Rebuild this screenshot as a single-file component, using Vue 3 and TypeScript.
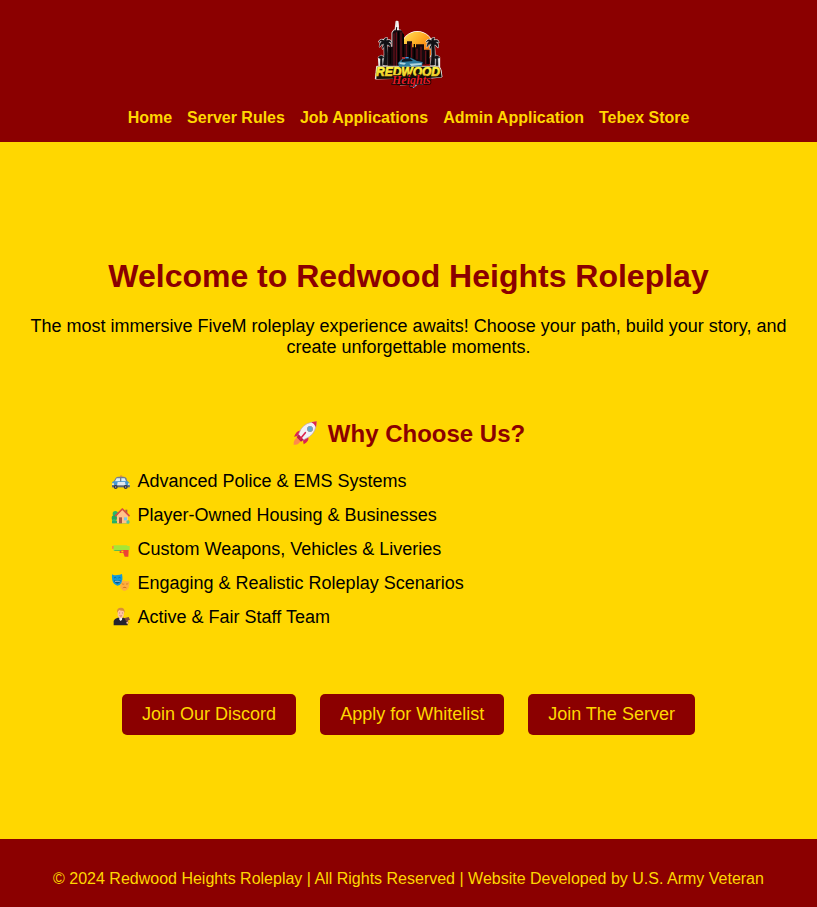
<script setup lang="ts">
interface LinkItem {
  label: string
  href: string
}

interface Feature {
  icon: 'car' | 'house' | 'blaster' | 'masks' | 'judge'
  text: string
}

const navLinks: LinkItem[] = [
  { label: 'Home', href: '#home' },
  { label: 'Server Rules', href: '#rules' },
  { label: 'Job Applications', href: '#jobs' },
  { label: 'Admin Application', href: '#admin' },
  { label: 'Tebex Store', href: '#store' },
]

const features: Feature[] = [
  { icon: 'car', text: 'Advanced Police & EMS Systems' },
  { icon: 'house', text: 'Player-Owned Housing & Businesses' },
  { icon: 'blaster', text: 'Custom Weapons, Vehicles & Liveries' },
  { icon: 'masks', text: 'Engaging & Realistic Roleplay Scenarios' },
  { icon: 'judge', text: 'Active & Fair Staff Team' },
]

const actions: LinkItem[] = [
  { label: 'Join Our Discord', href: '#discord' },
  { label: 'Apply for Whitelist', href: '#whitelist' },
  { label: 'Join The Server', href: '#join' },
]
</script>

<template>
  <div class="page">
    <header class="site-header">
      <svg class="logo" viewBox="13 9 240 240" role="img" aria-label="Redwood Heights">
        <defs>
          <linearGradient id="sun" x1="0" y1="0" x2="1" y2="1">
            <stop offset="0" stop-color="#ffe95e" />
            <stop offset="0.45" stop-color="#ffa51f" />
            <stop offset="1" stop-color="#ec5210" />
          </linearGradient>
          <linearGradient id="gold" x1="0" y1="0" x2="0" y2="1">
            <stop offset="0.2" stop-color="#fff23c" />
            <stop offset="0.85" stop-color="#e0a010" />
          </linearGradient>
          <g id="palm">
            <path d="M-3 -2 L4 -2 Q8 30 6 62 L-6 62 Q0 30 -3 -2Z" />
            <path d="M0 0 Q-11 -5 -17 7 Q-16 -8 -8 -8 Q-15 -12 -19 -8 Q-13 -18 -4 -11 Q-3 -20 5 -19 Q2 -15 4 -11 Q14 -17 18 -6 Q12 -10 8 -6 Q18 -4 16 9 Q11 0 3 0 Q6 6 2 11 Q-1 6 -1 2 Q-6 5 -8 13 Q-10 5 0 0Z" />
          </g>
        </defs>
        <circle cx="158" cy="106" r="49" fill="#fff" />
        <circle cx="158" cy="106" r="47" fill="url(#sun)" />
        <g stroke="#e8e8e8" stroke-width="5" stroke-linejoin="round" fill="#e8e8e8">
          <use href="#palm" x="62" y="97" />
          <use href="#palm" x="204" y="97" />
          <path d="M78 166V106h5V62l5-7h4l3-26h3l3 26h5l5 7v104z" />
          <path d="M42 136l8-5 8 5v28H44z M208 136l8-5 8 5v28h-14z" />
        </g>
        <g fill="#101014" stroke="#101014" stroke-width="2" stroke-linejoin="round">
          <use href="#palm" x="62" y="97" />
          <use href="#palm" x="204" y="97" />
          <path d="M41 137q8-12 17 0-7-2-6 5l1 22h-6l1-22q-1-5-7-5zM208 137q8-12 17 0-7-2-6 5l1 22h-6l1-22q-1-5-7-5z" />
        </g>
        <path d="M69 166v-62h14V62l5-7h5l2-10h7l2 10h6l5 7v34h12v-8h15v18h12v-9h24v16h17v43z" fill="#17090d" />
        <path d="M97 55l2-28h2l2 28z" fill="#fff" />
        <path d="M88 64v100M95 61v103M109 61v103M125 97v42M141 94v43M157 110v32M169 104v42M183 116v40" stroke="#74131d" stroke-width="3" />
        <path d="M77 107v48M102 58v96M116 65v88M134 98v52M149 96v44M190 118v38" stroke="#000" stroke-width="4" />
        <path d="M36 163h188l5 11 3 21-40 4-3 10-17 8-12-2-14 12-9-10-31 2-9-20-65 2 2-20z" fill="#e8e8e8" stroke="#e8e8e8" stroke-width="3" stroke-linejoin="round" />
        <path d="M39 164h183l6 10 3 22-42 2-3 10-17 7-12-2-16 5-43 2-6-20-57 1 1-18z" fill="#141006" />
        <path d="M100 153l12-12 26-4 19 10 17 3-2 13-68 2z" fill="#2d7ba0" />
        <path d="M112 144l10-5 13-1 10 9-34 3z" fill="#0b1824" />
        <path d="M104 151l20 2-5 5-14-2zM134 155l37-2v5l-31 4z" fill="#b2d5dd" />
        <path d="M112 138h9" stroke="#f54042" stroke-width="4" />
        <path d="M122 137h10" stroke="#459ae9" stroke-width="4" />
        <text>
          <tspan class="logo-name" x="34" y="191">REDWOOD</tspan>
          <tspan class="logo-script" x="82" y="216">Heights</tspan>
        </text>
      </svg>
      <nav class="nav" aria-label="Main">
        <a v-for="link in navLinks" :key="link.label" :href="link.href">{{ link.label }}</a>
      </nav>
    </header>

    <main class="hero">
      <h1>Welcome to Redwood Heights Roleplay</h1>
      <p class="intro">
        The most immersive FiveM roleplay experience awaits! Choose your path, build your story, and create
        unforgettable moments.
      </p>

      <section class="why">
        <h2>
          <svg class="rocket" viewBox="24 24 78 84" aria-hidden="true">
            <path d="M44 76q-15 2-15 22 16 3 22-14z" fill="#ff8a4c" />
            <path d="M51 56q-12-2-21 18l15-3zM73 76q3 12-14 21l-3-16z" fill="#dc2451" />
            <path d="M96 30Q66 29 51 51L41 73l13 13 22-12Q98 59 96 30Z" fill="#f2f0f6" stroke="#b9a0b5" stroke-width="2" />
            <path d="M82 31l16-3-2 18Q93 36 82 31Z" fill="#dc2451" />
            <path d="M44 67l-6 9 13 13 8-6z" fill="#bd1f49" />
            <path d="M64 62L49 80" stroke="#dc2451" stroke-width="5" stroke-linecap="round" />
            <circle cx="78" cy="51" r="8" fill="#62a8ce" stroke="#8d9eb0" stroke-width="3" />
          </svg>
          <span>Why Choose Us?</span>
        </h2>
        <ul class="features">
          <li v-for="feature in features" :key="feature.icon">
            <svg v-if="feature.icon === 'car'" class="icon" viewBox="15 15 72 60" aria-hidden="true">
              <path d="M47 34l2-6h5l2 6z" fill="#e99a35" />
              <path d="M35 36q3-4 8-4h17q5 0 7 5l4 11H28z" fill="#777e8b" />
              <path d="M38 37h10v10H32zM52 37h10l5 10H52z" fill="#d9f0fb" />
              <path d="M28 46h43q6 3 6 11v6H24V52q0-4 4-6z" fill="#4698d2" />
              <path d="M41 48h22l3 14H38z" fill="#e2e8ed" />
              <path d="M24 58h53v6H24z" fill="#596474" />
              <path d="M24 52h6v5h-6zM72 52h5v5h-5z" fill="#f8e8a1" />
              <circle cx="35" cy="63" r="6" fill="#363442" />
              <circle cx="65" cy="63" r="6" fill="#363442" />
              <circle cx="35" cy="63" r="2" fill="#b6b5be" />
              <circle cx="65" cy="63" r="2" fill="#b6b5be" />
            </svg>
            <svg v-else-if="feature.icon === 'house'" class="icon" viewBox="15 117 72 60" aria-hidden="true">
              <circle cx="34" cy="143" r="8" fill="#28b56d" />
              <circle cx="31" cy="156" r="8" fill="#22a65f" />
              <circle cx="30" cy="166" r="6" fill="#35c378" />
              <path d="M24 164h50v8H24z" fill="#28ae66" />
              <path d="M64 131h6v14h-6z" fill="#a85c48" />
              <path d="M39 148l16-17 17 17v24H39z" fill="#ffc28a" />
              <path d="M35 149l20-20 20 20" fill="none" stroke="#d94b43" stroke-width="5" stroke-linejoin="round" stroke-linecap="round" />
              <path d="M45 154h9v18h-9z" fill="#a65342" />
              <path d="M60 154h9v9h-9z" fill="#73c8e8" />
              <circle cx="72" cy="168" r="5" fill="#51c2a0" />
            </svg>
            <svg v-else-if="feature.icon === 'blaster'" class="icon" viewBox="15 15 72 60" aria-hidden="true">
              <path d="M24 36h4v-2h42v2h7v12H55l-3 2H28v-5h-4z" fill="#a5e638" />
              <path d="M24 36h5v8h-5z" fill="#ff8a38" />
              <path d="M47 48h27l-1 20H62l-4-11H47z" fill="#ed4335" />
              <path d="M52 50h6v5h-6z" fill="#ffd600" />
              <path d="M31 48h20v3H31z" fill="#59bc54" />
            </svg>
            <svg v-else-if="feature.icon === 'masks'" class="icon" viewBox="15 117 72 60" aria-hidden="true">
              <path d="M24 121q5 4 15 2 9 0 15-3 3 18-1 26-4 8-13 9-12-3-15-16-2-9-1-18z" fill="#129bd8" />
              <path d="M30 132q4-4 7 0M43 132q4-4 7 0" fill="none" stroke="#075886" stroke-width="2" />
              <path d="M30 139q10 4 20 0-2 10-10 10-7 0-10-10z" fill="#075886" />
              <path d="M33 141q8 2 14 0v2H34z" fill="#fff" />
              <path d="M54 138q8 5 22 3 1 11-2 20-4 9-13 10-12-4-13-16 7-8 6-17z" fill="#ffae3d" />
              <path d="M53 149q5 3 8 1M66 150q4 1 7-2" fill="none" stroke="#c66b20" stroke-width="2" />
              <path d="M55 163q7-10 14 0-7-3-14 0z" fill="#c66b20" />
            </svg>
            <svg v-else class="icon" viewBox="15 219 72 60" aria-hidden="true">
              <path d="M29 274v-13q2-8 12-10h18q9 2 12 10v13z" fill="#25232e" />
              <path d="M46 249h9l-1 8-4 4-4-4z" fill="#f5f3f3" />
              <path d="M41 235q0-13 10-13t9 13l-1 10q-4 8-9 8t-9-8z" fill="#ffc29b" />
              <path d="M39 237q-2-16 12-16 12 0 11 16l-4-7q-8 1-12-2l-4 4z" fill="#db8e35" />
              <path d="M46 237h2M54 237h2" stroke="#694638" stroke-width="2" />
              <path d="M47 245q4 3 7 0" fill="none" stroke="#b1554c" stroke-width="2" />
              <path d="M62 252l12-3 4 8-12 5z" fill="#824939" />
              <path d="M68 257l4 11" stroke="#824939" stroke-width="4" />
              <circle cx="70" cy="266" r="3" fill="#ffc29b" />
            </svg>
            <span>{{ feature.text }}</span>
          </li>
        </ul>
      </section>

      <div class="actions">
        <a v-for="action in actions" :key="action.label" class="button" :href="action.href">{{ action.label }}</a>
      </div>
    </main>

    <footer class="site-footer">
      © 2024 Redwood Heights Roleplay | All Rights Reserved | Website Developed by U.S. Army Veteran
    </footer>
  </div>
</template>

<style>
body {
  background: #ffd700;
}
</style>

<style scoped>
.page {
  display: flex;
  flex-direction: column;
  min-height: 100vh;
  background: #ffd700;
  color: #000;
  font-family: Arial, "Liberation Sans", sans-serif;
  text-align: center;
}

.site-header {
  display: flex;
  flex-direction: column;
  align-items: center;
  gap: 14px;
  padding: 15px;
  background: #8b0000;
}

.logo {
  display: block;
  width: 80px;
  height: 80px;
}

.logo-name {
  font: italic bold 36px "Liberation Sans", sans-serif;
  fill: url(#gold);
  stroke: url(#gold);
  stroke-width: 2px;
}

.logo-script {
  font: italic bold 36px "Liberation Serif", serif;
  fill: #e51a24;
  stroke: #12080a;
  stroke-width: 5px;
  paint-order: stroke;
}

.nav {
  display: flex;
  flex-wrap: wrap;
  justify-content: center;
  gap: 0 15px;
  font-size: 16px;
  font-weight: bold;
  line-height: 18px;
}

.nav a {
  color: #ffd700;
  text-decoration: none;
}

.hero {
  flex: 1;
  padding: 116px 20px 104px;
}

h1,
h2 {
  margin: 0;
  color: #8b0000;
}

h1 {
  font-size: 32px;
  line-height: 36px;
}

.intro {
  margin: 22px 0 0;
  font-size: 18px;
  line-height: 21px;
}

.why {
  max-width: 600px;
  margin: 62px auto 0;
}

h2 {
  display: flex;
  justify-content: center;
  gap: 10px;
  font-size: 24px;
  line-height: 28px;
}

.rocket {
  width: 26px;
  height: 28px;
}

.features {
  display: grid;
  gap: 14px;
  margin: 23px 0 0;
  padding: 0;
  list-style: none;
  font-size: 18px;
  line-height: 20px;
  text-align: left;
}

.features li {
  display: flex;
  gap: 5px;
}

.icon {
  flex: none;
  width: 24px;
  height: 20px;
}

.actions {
  display: flex;
  flex-wrap: wrap;
  justify-content: center;
  gap: 24px;
  margin-top: 67px;
}

.button {
  padding: 10px 20px;
  border-radius: 5px;
  background: #8b0000;
  color: #ffd700;
  font-size: 18px;
  line-height: 21px;
  text-decoration: none;
}

.site-footer {
  padding: 30px 20px 18px;
  background: #8b0000;
  color: #ffd700;
  font-size: 16px;
  line-height: 20px;
}
</style>
